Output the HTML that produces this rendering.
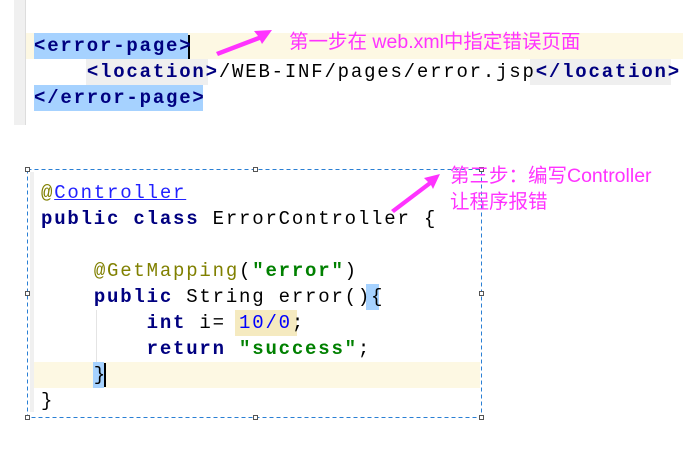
<!DOCTYPE html>
<html><head><meta charset="utf-8"><style>
body{margin:0;width:683px;height:460px;background:#fff;position:relative;overflow:hidden;font-family:"Liberation Mono",monospace}
.a{position:absolute}
.code{position:absolute;font-size:19px;letter-spacing:1.8px;line-height:26px;white-space:pre;color:#000}
.k{color:#000080;font-weight:bold}
.s{color:#008000;font-weight:bold}
.an{color:#808000}
.cn{font-family:"Liberation Sans","Noto Sans CJK SC",sans-serif;color:#ff33ff;position:absolute;font-size:19.5px;white-space:nowrap}
</style></head><body>
<div class="a" style="left:14px;top:0;width:12px;height:125px;background:#f0f0f0"></div>
<div class="a" style="left:25px;top:0;width:1px;height:125px;background:#ddd"></div>
<div class="a" style="left:26px;top:33px;width:657px;height:26px;background:#fdf8e3"></div>
<div class="a" style="left:34px;top:33px;width:154px;height:26px;background:#a6d2ff"></div>
<div class="a" style="left:188px;top:35px;width:2px;height:24px;background:#000"></div>
<div class="a" style="left:86px;top:59px;width:122px;height:26px;background:#efefef"></div>
<div class="a" style="left:530px;top:59px;width:141px;height:26px;background:#efefef"></div>
<div class="a" style="left:34px;top:85px;width:169px;height:26px;background:#a6d2ff"></div>
<div class="code" style="left:34px;top:33px"><span class="k">&lt;error-page&gt;</span>
    <span class="k">&lt;location&gt;</span>/WEB-INF/pages/error.jsp<span class="k">&lt;/location&gt;</span>
<span class="k">&lt;/error-page&gt;</span></div>
<svg class="a" style="left:0;top:0" width="683" height="460">
<polygon points="216,52 258,36 254,31 272,30 262,44 260,40 218,56" fill="#ff33ff"/>
<polygon points="391,210 428,182 424,178 440,174 433,189 431,185 394,213" fill="#ff33ff"/>
<rect x="27.5" y="169.5" width="454" height="248" fill="none" stroke="#2a7fd4" stroke-dasharray="4,3"/>
<g fill="#fff" stroke="#555">
<rect x="25.5" y="167.5" width="4" height="4"/><rect x="253.5" y="167.5" width="4" height="4"/><rect x="479.5" y="167.5" width="4" height="4"/>
<rect x="25.5" y="291.5" width="4" height="4"/><rect x="479.5" y="291.5" width="4" height="4"/>
<rect x="25.5" y="415.5" width="4" height="4"/><rect x="253.5" y="415.5" width="4" height="4"/><rect x="479.5" y="415.5" width="4" height="4"/>
</g>
</svg>
<div class="cn" style="left:289px;top:25px">第一步在 web.xml中指定错误页面</div>
<div class="cn" style="left:450px;top:159px">第三步：编写Controller</div>
<div class="cn" style="left:450px;top:185px">让程序报错</div>
<div class="a" style="left:30px;top:172px;width:4px;height:240px;background:#f0f0f0"></div>
<div class="a" style="left:34px;top:362px;width:446px;height:26px;background:#fdf8e3"></div>
<div class="a" style="left:96px;top:336px;width:1px;height:26px;background:#e4e4e4"></div>
<div class="a" style="left:96px;top:310px;width:1px;height:26px;background:#e4e4e4"></div>
<div class="a" style="left:366px;top:284px;width:13px;height:26px;background:#a6d2ff"></div>
<div class="a" style="left:235px;top:310px;width:62px;height:26px;background:#f5eac0"></div>
<div class="a" style="left:93px;top:362px;width:11px;height:26px;background:#a6d2ff"></div>
<div class="a" style="left:104px;top:363px;width:2px;height:24px;background:#000"></div>
<div class="code" style="left:41px;top:180px"><span class="an">@</span><span style="color:#2222ff;text-decoration:underline">Controller</span>
<span class="k">public class</span> ErrorController {

    <span class="an">@GetMapping</span>(<span class="s">"error"</span>)
    <span class="k">public</span> String error(){
        <span class="k">int</span> i= <span style="color:#0000ff">10/0</span>;
        <span class="k">return</span> <span class="s">"success"</span>;
    }
}</div>
</body></html>
